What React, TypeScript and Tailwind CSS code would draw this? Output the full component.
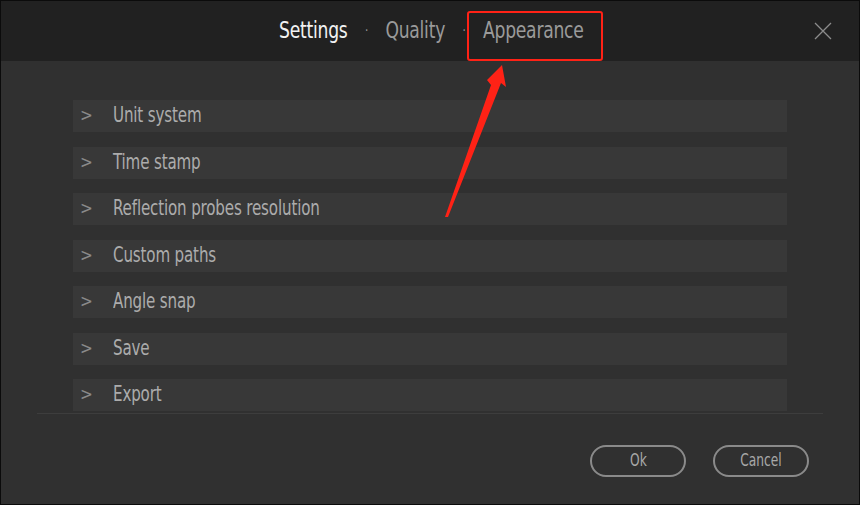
import React from "react";

const rows = [
  "Unit system",
  "Time stamp",
  "Reflection probes resolution",
  "Custom paths",
  "Angle snap",
  "Save",
  "Export",
];

const font = { fontFamily: '"DejaVu Sans Condensed", "DejaVu Sans", sans-serif', fontStretch: "condensed" as const };

export default function App() {
  return (
    <div className="w-[860px] h-[505px] bg-[#0b0b0b] p-[1px] overflow-hidden" style={font}>
      <div className="relative w-full h-full bg-[#303030] flex flex-col">
        <div className="relative h-[60px] bg-[#212121] flex items-center justify-center">
          <div className="flex items-center text-[23px] tracking-[-0.3px] pb-[1px] scale-x-[0.83] pl-[2px]">
            <span className="text-[#f2f2f2]">Settings</span>
            <span className="text-[#9a9a9a] mx-[21px] text-[14px]">·</span>
            <span className="text-[#9a9a9a]">Quality</span>
            <span className="text-[#9a9a9a] mx-[21px] text-[14px]">·</span>
            <span className="text-[#9a9a9a]">Appearance</span>
          </div>
          <svg className="absolute left-[813px] top-[21px]" width="18" height="18" viewBox="0 0 18 18">
            <path d="M1 1 L17 17 M17 1 L1 17" stroke="#8c8c8c" strokeWidth="1.3" fill="none" />
          </svg>
        </div>
        <div className="flex flex-col gap-[14.5px] pt-[39px] px-[72px]">
          {rows.map((r) => (
            <div key={r} className="h-[32px] bg-[#383838] flex items-center">
              <span className="w-[40px] pl-[7px] text-[17px] text-[#8a8a8a]">&gt;</span>
              <span className="inline-block origin-left scale-x-[0.8] text-[21px] tracking-[-0.2px] text-[#acacac]">{r}</span>
            </div>
          ))}
        </div>
        <div className="mx-[36px] mt-[2px] h-[1px] bg-[#3d3d3d]" />
        <div className="flex justify-end gap-[27px] pr-[50px] pt-[31px]">
          <button className="w-[96px] h-[32px] rounded-full border-2 border-[#8a8a8a] text-[17px] text-[#a8a8a8]">
            <span className="inline-block scale-x-[0.8]">Ok</span>
          </button>
          <button className="w-[96px] h-[32px] rounded-full border-2 border-[#8a8a8a] text-[17px] text-[#a8a8a8]">
            <span className="inline-block scale-x-[0.8]">Cancel</span>
          </button>
        </div>
        <div className="absolute left-[466px] top-[10px] w-[136px] h-[50px] border-2 border-[#ff2216] rounded-[3px]" />
        <svg className="absolute left-0 top-0 pointer-events-none" width="858" height="503" viewBox="0 0 858 503">
          <polygon points="444,216 490,84 486,79 501,64 505,86 500,82 447,216" fill="#ff2216" />
        </svg>
      </div>
    </div>
  );
}
